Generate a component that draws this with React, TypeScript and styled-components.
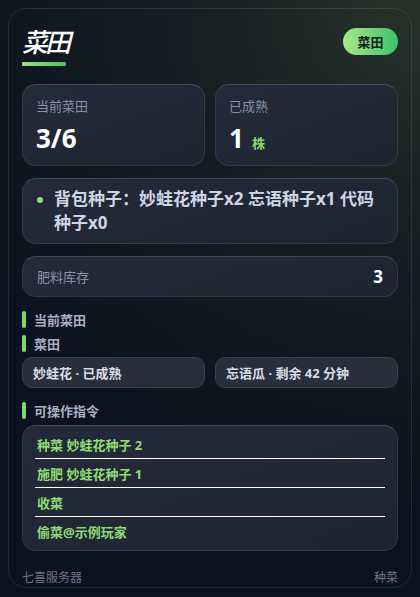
import React from 'react'
import styled, { createGlobalStyle } from 'styled-components'

const GlobalStyle = createGlobalStyle`
  html, body {
    margin: 0;
    padding: 0;
    background: #0d1220;
  }
  body {
    font-family: "Noto Sans", "Noto Sans CJK SC", sans-serif;
    color: #e6e9f2;
  }
  * { box-sizing: border-box; }
`

const Page = styled.div`
  width: 420px;
  height: 597px;
  padding: 8px;
  background: radial-gradient(circle at 100% 0%, #26332a 0%, #151d22 35%, #0d1220 70%);
`

const Panel = styled.div`
  height: 580px;
  border: 1px solid rgba(140, 170, 150, 0.16);
  border-radius: 18px;
  padding: 15px 13px 0 13px;
  display: flex;
  flex-direction: column;
`

const Header = styled.div`
  display: flex;
  justify-content: space-between;
  align-items: flex-start;
`

const TitleWrap = styled.div`
  display: flex;
  flex-direction: column;
`

const Title = styled.h1`
  margin: 0;
  font-size: 26px;
  line-height: 36px;
  font-weight: 500;
  font-style: italic;
  color: #ffffff;
  letter-spacing: -3px;
`

const Underline = styled.div`
  width: 44px;
  height: 4px;
  margin-top: 2px;
  border-radius: 1px;
  background: linear-gradient(90deg, #9de283, #45c267);
`

const Badge = styled.div`
  margin-top: 4px;
  width: 55px;
  height: 27px;
  border-radius: 14px;
  background: linear-gradient(90deg, #a8e88b, #3cc26a);
  color: #12201a;
  font-size: 13px;
  font-weight: 700;
  display: flex;
  align-items: center;
  justify-content: center;
`

const StatGrid = styled.div`
  display: grid;
  grid-template-columns: 1fr 1fr;
  gap: 10px;
  margin-top: 18px;
`

const Box = styled.div`
  background: linear-gradient(160deg, #242a39, #1f2433);
  border: 1px solid #343a4a;
  border-top-color: #444b5a;
  border-radius: 14px;
`

const StatCard = styled(Box)`
  height: 82px;
  padding: 12px 13px 0 13px;
`

const StatLabel = styled.div`
  font-size: 13px;
  line-height: 18px;
  color: #8a93a9;
`

const StatValue = styled.div`
  margin-top: 7px;
  display: flex;
  align-items: baseline;
  gap: 8px;
  font-size: 26px;
  line-height: 32px;
  font-weight: 700;
  color: #ffffff;
`

const Unit = styled.span`
  font-size: 13px;
  font-weight: 700;
  color: #86d96b;
`

const SeedCard = styled(Box)`
  margin-top: 12px;
  padding: 8px 14px 8px 14px;
  display: flex;
  align-items: flex-start;
  gap: 11px;
`

const Dot = styled.span`
  flex: none;
  width: 6px;
  height: 6px;
  margin-top: 10px;
  border-radius: 50%;
  background: #8fdc72;
`

const SeedText = styled.div`
  font-size: 17px;
  line-height: 24px;
  font-weight: 700;
  color: #cfd5e5;
`

const StockCard = styled(Box)`
  margin-top: 12px;
  height: 41px;
  padding: 0 14px;
  display: flex;
  align-items: center;
  justify-content: space-between;
`

const StockLabel = styled.span`
  font-size: 13px;
  color: #8a93a9;
`

const StockValue = styled.span`
  font-size: 17px;
  font-weight: 700;
  color: #ffffff;
`

const SectionLabel = styled.div<{ top: number }>`
  margin-top: ${({ top }) => top}px;
  display: flex;
  align-items: center;
  gap: 8px;
  height: 17px;
  font-size: 13px;
  font-weight: 700;
  color: #a9b0c4;

  &::before {
    content: '';
    width: 4px;
    height: 17px;
    border-radius: 2px;
    background: #7fda6a;
  }
`

const ChipRow = styled.div`
  margin-top: 5px;
  display: grid;
  grid-template-columns: 1fr 1fr;
  gap: 10px;
`

const Chip = styled.div`
  height: 31px;
  padding: 0 10px;
  display: flex;
  align-items: center;
  background: #292e3d;
  border: 1px solid #3a4050;
  border-radius: 10px;
  font-size: 13px;
  font-weight: 700;
  color: #d9dde8;
`

const CommandCard = styled(Box)`
  margin-top: 6px;
  padding: 4px 12px 5px 12px;
`

const Command = styled.div<{ last?: boolean }>`
  height: ${({ last }) => (last ? 28 : 29)}px;
  padding-left: 2px;
  display: flex;
  align-items: center;
  border-bottom: ${({ last }) => (last ? 'none' : '1px solid #ffffff')};
  font-size: 13px;
  font-weight: 700;
  color: #8fdc74;
`

const Footer = styled.div`
  margin-top: auto;
  display: flex;
  justify-content: space-between;
  font-size: 12px;
  line-height: 16px;
  color: #6c7489;
  padding-bottom: 1px;
`

const commands = ['种菜 妙蛙花种子 2', '施肥 妙蛙花种子 1', '收菜', '偷菜@示例玩家']

export default function App() {
  return (
    <Page>
      <GlobalStyle />
      <Panel>
        <Header>
          <TitleWrap>
            <Title>菜田</Title>
            <Underline />
          </TitleWrap>
          <Badge>菜田</Badge>
        </Header>

        <StatGrid>
          <StatCard>
            <StatLabel>当前菜田</StatLabel>
            <StatValue>3/6</StatValue>
          </StatCard>
          <StatCard>
            <StatLabel>已成熟</StatLabel>
            <StatValue>
              1<Unit>株</Unit>
            </StatValue>
          </StatCard>
        </StatGrid>

        <SeedCard>
          <Dot />
          <SeedText>背包种子：妙蛙花种子x2 忘语种子x1 代码种子x0</SeedText>
        </SeedCard>

        <StockCard>
          <StockLabel>肥料库存</StockLabel>
          <StockValue>3</StockValue>
        </StockCard>

        <SectionLabel top={14}>当前菜田</SectionLabel>
        <SectionLabel top={7}>菜田</SectionLabel>
        <ChipRow>
          <Chip>妙蛙花 · 已成熟</Chip>
          <Chip>忘语瓜 · 剩余 42 分钟</Chip>
        </ChipRow>

        <SectionLabel top={14}>可操作指令</SectionLabel>
        <CommandCard>
          {commands.map((c, i) => (
            <Command key={c} last={i === commands.length - 1}>
              {c}
            </Command>
          ))}
        </CommandCard>

        <Footer>
          <span>七喜服务器</span>
          <span>种菜</span>
        </Footer>
      </Panel>
    </Page>
  )
}
